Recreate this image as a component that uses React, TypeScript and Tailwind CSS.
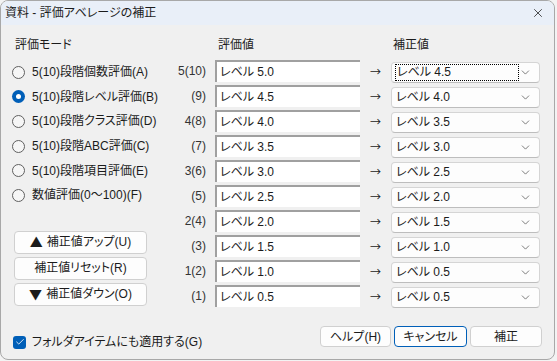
import { ChevronDown, X, Check } from 'lucide-react';

const modes = [
  '5(10)段階個数評価(A)',
  '5(10)段階レベル評価(B)',
  '5(10)段階クラス評価(D)',
  '5(10)段階ABC評価(C)',
  '5(10)段階項目評価(E)',
  '数値評価(0〜100)(F)',
];

const rows = [
  { no: '5(10)', from: 'レベル 5.0', to: 'レベル 4.5' },
  { no: '(9)', from: 'レベル 4.5', to: 'レベル 4.0' },
  { no: '4(8)', from: 'レベル 4.0', to: 'レベル 3.5' },
  { no: '(7)', from: 'レベル 3.5', to: 'レベル 3.0' },
  { no: '3(6)', from: 'レベル 3.0', to: 'レベル 2.5' },
  { no: '(5)', from: 'レベル 2.5', to: 'レベル 2.0' },
  { no: '2(4)', from: 'レベル 2.0', to: 'レベル 1.5' },
  { no: '(3)', from: 'レベル 1.5', to: 'レベル 1.0' },
  { no: '1(2)', from: 'レベル 1.0', to: 'レベル 0.5' },
  { no: '(1)', from: 'レベル 0.5', to: 'レベル 0.5' },
];

const Radio = ({ checked, label }: { checked: boolean; label: string }) => (
  <div className="flex h-[24.6px] items-center">
    {checked ? (
      <div className="flex h-[13px] w-[13px] items-center justify-center rounded-full bg-[#005fb8]">
        <div className="h-[5px] w-[5px] rounded-full bg-white" />
      </div>
    ) : (
      <div className="h-[13px] w-[13px] rounded-full border border-[#606060] bg-[#f6f6f6]" />
    )}
    <span className="ml-[7px]">{label}</span>
  </div>
);

const SideButton = ({ children }: { children: React.ReactNode }) => (
  <button className="flex h-[23px] w-[133px] items-center justify-center rounded-[4px] border border-[#d0d0d0] bg-[#fdfdfd] text-[12px] text-[#1b1b1b]">
    {children}
  </button>
);

export default function App() {
  return (
    <div className="h-[361px] w-[557px] bg-[#f3f3f3] font-['Liberation_Sans','Noto_Sans_CJK_JP',sans-serif] text-[12px] leading-[16px] text-[#1b1b1b] [font-feature-settings:'palt']">
      <div className="flex h-[360px] w-[555px] flex-col overflow-hidden rounded-[8px] border border-[#a8a8a8] bg-[#f0f0f0]">
        <div className="flex h-[24px] shrink-0 items-center justify-between bg-[#e9eff8] pl-[4px] pr-[9px]">
          <span>資料 - 評価アベレージの補正</span>
          <X size={14} strokeWidth={1.3} className="text-[#1b1b1b]" />
        </div>

        <div className="flex pt-[12px]">
          <div className="ml-[11px] flex w-[158px] flex-col">
            <div className="ml-[3px] h-[23px]">評価モード</div>
            {modes.map((m, i) => (
              <Radio key={m} checked={i === 1} label={m} />
            ))}
            <div className="ml-[2px] mt-[23px] flex flex-col gap-[3px]">
              <SideButton>
                <span className="mr-[4px] font-['Noto_Sans_CJK_JP'] text-[13px]">▲</span>補正値アップ(U)
              </SideButton>
              <SideButton>補正値リセット(R)</SideButton>
              <SideButton>
                <span className="mr-[4px] font-['Noto_Sans_CJK_JP'] text-[13px]">▼</span>補正値ダウン(O)
              </SideButton>
            </div>
          </div>

          <div className="flex flex-col">
            <div className="flex h-[23px]">
              <span className="ml-[48px] w-[175px]">評価値</span>
              <span>補正値</span>
            </div>
            {rows.map((r, i) => (
              <div key={i} className="mb-[3px] flex h-[22px] items-center">
                <span className="w-[37px] pr-[1px] text-right text-[#333]">{r.no}</span>
                <div className="ml-[8px] flex h-[22px] w-[145px] items-center border-l-2 border-t-2 border-[#a0a0a0] bg-white pl-[3px]">
                  {r.from}
                </div>
                <span className="w-[31px] text-center font-['Noto_Sans_CJK_JP'] text-[11px] text-[#222]">→</span>
                <div className="relative mt-[2px] flex h-[21px] w-[149px] items-center justify-between rounded-[4px] border border-[#d5d5d5] border-b-[#bdbdbd] bg-[#fdfdfd] pl-[4px] pr-[7px]">
                  {i === 0 ? (
                    <span className="-ml-[1px] flex h-[17px] w-[126px] items-center border border-dotted border-black pl-[1px]">
                      {r.to}
                    </span>
                  ) : (
                    <span>{r.to}</span>
                  )}
                  <ChevronDown size={13} strokeWidth={1.4} className="text-[#555]" />
                </div>
              </div>
            ))}
          </div>
        </div>

        <div className="mt-[16px] flex items-start">
          <div className="ml-[12px] mt-[8px] flex items-center">
            <div className="flex h-[13px] w-[13px] items-center justify-center rounded-[3px] bg-[#005fb8]">
              <Check size={10} strokeWidth={2} className="text-white" />
            </div>
            <span className="ml-[6px]">フォルダアイテムにも適用する(G)</span>
          </div>
          <div className="ml-auto mr-[12px] flex gap-[3px]">
            <button className="h-[21px] w-[71px] rounded-[4px] border border-[#d0d0d0] bg-[#fdfdfd]">ヘルプ(H)</button>
            <button className="h-[21px] w-[73px] rounded-[4px] border border-[#005fb8] bg-[#fdfdfd]">キャンセル</button>
            <button className="h-[21px] w-[72px] rounded-[4px] border border-[#d0d0d0] bg-[#fdfdfd]">補正</button>
          </div>
        </div>
      </div>
    </div>
  );
}
